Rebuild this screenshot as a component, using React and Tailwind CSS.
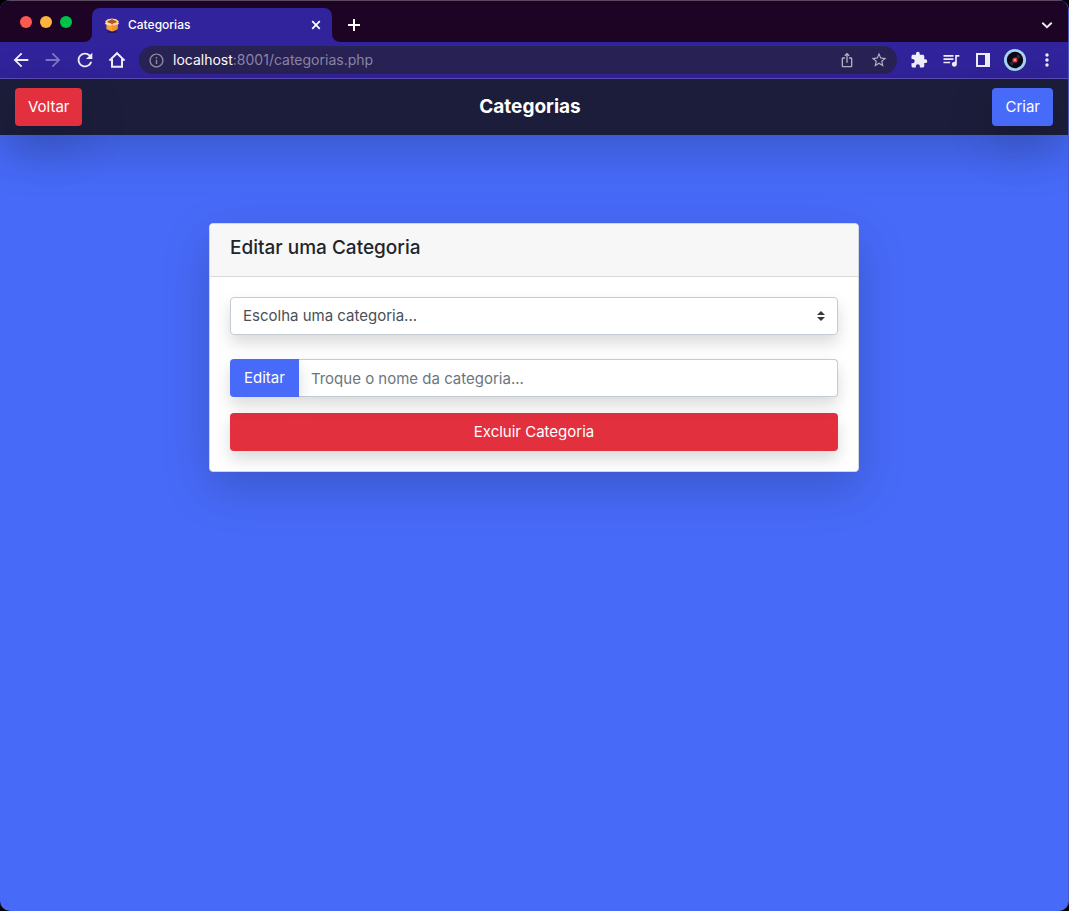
import React from "react";
import {
  MdArrowBack,
  MdArrowForward,
  MdRefresh,
  MdInfoOutline,
  MdIosShare,
  MdStarBorder,
  MdExtension,
  MdQueueMusic,
  MdMoreVert,
} from "react-icons/md";

const SHADOW_LG = "shadow-[0_16px_48px_rgba(0,0,0,0.175)]";
const SHADOW_MD = "shadow-[0_8px_16px_rgba(0,0,0,0.15)]";

function IconButton({ label, children }) {
  return (
    <button type="button" aria-label={label} className="flex h-7 w-8 shrink-0 items-center justify-center">
      {children}
    </button>
  );
}

function BoxIcon() {
  return (
    <svg viewBox="0 0 16 16" className="size-4 shrink-0" aria-hidden="true">
      <path d="M3.5 14.4h9v1h-9z" fill="#151040" />
      <path d="M2.4 6h11.2v6L9 14.2H7L2.4 12z" fill="#f9a33b" />
      <path d="M8 7.5L13.6 6v6L9 14.2H8z" fill="#f3912c" />
      <path d="M3.4 3.6L8 2.2l4.6 1.4 1.2 2L8 7.4 2.2 5.6z" fill="#b0551c" />
      <path d="M1 4.6L3.6 2.2l4.4-.8-.2 1L4 4 2.4 6z" fill="#ffcf8a" />
      <path d="M15 4.6l-2.6-2.4L8 1.4l.2 1L12 4l1.6 2z" fill="#ffcf8a" />
      <path d="M2.2 4.8L8 7 6.9 8.8.8 7z" fill="#ffe2b4" />
      <path d="M13.8 4.8L8 7l1.1 1.8L15.2 7z" fill="#ffd79c" />
    </svg>
  );
}

function TabStrip() {
  return (
    <div className="flex h-[42px] items-end border-t border-[#5b4a60] bg-[#1e0424] text-white">
      <div className="flex h-full w-[92px] shrink-0 items-center bg-[#31239b]">
        <div className="flex h-full w-full items-center gap-2 rounded-br-lg bg-[#1e0424] pl-5">
          <button type="button" aria-label="Fechar janela" className="size-3 rounded-full bg-[#ff5850]" />
          <button type="button" aria-label="Minimizar janela" className="size-3 rounded-full bg-[#ffb43e]" />
          <button type="button" aria-label="Maximizar janela" className="size-3 rounded-full bg-[#00c249]" />
        </div>
      </div>
      <div className="flex h-[34px] w-60 shrink-0 items-center rounded-t-lg bg-[#31239b] pr-2 pl-3">
        <BoxIcon />
        <span className="grow pl-2 text-xs font-medium">Categorias</span>
        <button type="button" aria-label="Fechar aba" className="flex size-4 items-center justify-center">
          <svg viewBox="0 0 10 10" className="size-[10px]" fill="none" stroke="currentColor" strokeWidth="1.7">
            <path d="M1.2 1.2l7.6 7.6M8.8 1.2L1.2 8.8" />
          </svg>
        </button>
      </div>
      <div className="h-full grow bg-[#31239b]">
        <div className="flex h-full items-center justify-between rounded-bl-lg bg-[#1e0424] pt-[6px] pr-[13px] pl-[14px]">
          <button type="button" aria-label="Nova aba" className="flex size-4 items-center justify-center">
            <svg viewBox="0 0 12 12" className="size-3" fill="none" stroke="currentColor" strokeWidth="2">
              <path d="M6 0v12M0 6h12" />
            </svg>
          </button>
          <button type="button" aria-label="Pesquisar abas" className="flex size-4 items-center justify-center">
            <svg viewBox="0 0 12 12" className="size-3" fill="none" stroke="#eee8f0" strokeWidth="1.9">
              <path d="M1.3 3.7L6 8.2l4.7-4.5" />
            </svg>
          </button>
        </div>
      </div>
    </div>
  );
}

function Toolbar() {
  return (
    <div className="flex h-[37px] items-center border-b border-[#5e4fb4] bg-[#31239b] px-[5px] text-[#f1effa]">
      <IconButton label="Voltar página">
        <MdArrowBack size={22} />
      </IconButton>
      <IconButton label="Avançar página">
        <MdArrowForward size={22} className="text-[#8177c3]" />
      </IconButton>
      <IconButton label="Recarregar">
        <MdRefresh size={22} />
      </IconButton>
      <IconButton label="Página inicial">
        <svg viewBox="0 0 18 18" className="size-[18px]" fill="none" stroke="currentColor" strokeWidth="2">
          <path d="M1.4 9.6L9 2.2l7.6 7.4M4 8v7.8h10V8" />
        </svg>
      </IconButton>
      <div className="ml-[6px] flex h-7 min-w-0 grow items-center rounded-full bg-[#292255] pr-[2px] pl-[9px] text-[#b5b1c4]">
        <MdInfoOutline size={17} className="shrink-0 text-[#8d8f9f]" />
        <div
          role="textbox"
          aria-label="Endereço"
          className="min-w-0 grow truncate pl-2 text-sm text-[#8b86a8]"
        >
          <span className="text-white">localhost</span>:8001/categorias.php
        </div>
        <IconButton label="Compartilhar">
          <MdIosShare size={16} />
        </IconButton>
        <IconButton label="Favoritar">
          <MdStarBorder size={18} />
        </IconButton>
      </div>
      <div className="flex shrink-0 pl-[6px]">
        <IconButton label="Extensões">
          <MdExtension size={18} />
        </IconButton>
        <IconButton label="Controle de mídia">
          <MdQueueMusic size={20} />
        </IconButton>
        <IconButton label="Painel lateral">
          <svg viewBox="0 0 14 14" className="size-[14px]" fill="currentColor">
            <path fillRule="evenodd" d="M0 0h14v14H0zM2 2v10h7V2z" />
          </svg>
        </IconButton>
        <IconButton label="Perfil">
          <svg viewBox="0 0 22 22" className="size-[22px]">
            <circle cx="11" cy="11" r="11" fill="#a9d7f5" />
            <circle cx="11" cy="11" r="8.2" fill="#0b0b18" />
            <path d="M13.5 5.2a6.4 6.4 0 0 1 3.2 3.2l-3.2 1.4-1.4-1.4zM8.5 16.8a6.4 6.4 0 0 1-3.2-3.2l3.2-1.4 1.4 1.4z" fill="#2a2c3c" />
            <circle cx="11" cy="11" r="2.6" fill="#e8364c" />
            <circle cx="11" cy="11" r="1" fill="#ffc48a" />
          </svg>
        </IconButton>
        <IconButton label="Menu">
          <MdMoreVert size={20} />
        </IconButton>
      </div>
    </div>
  );
}

function Navbar() {
  return (
    <header
      className={`relative grid h-14 grid-cols-[1fr_auto_1fr] items-center bg-[#1b1d3a] px-[15px] text-white ${SHADOW_LG}`}
    >
      <a
        href="#voltar"
        className={`flex h-[38px] items-center justify-self-start rounded bg-[#e3303f] px-[13px] text-[15px] ${SHADOW_LG}`}
      >
        Voltar
      </a>
      <h1 className="mr-2 text-[19px] font-bold">Categorias</h1>
      <a
        href="#criar"
        className={`flex h-[38px] items-center justify-self-end rounded bg-[#476af8] px-[13px] text-[15px] ${SHADOW_LG}`}
      >
        Criar
      </a>
    </header>
  );
}

function EditCard() {
  return (
    <section
      className={`w-full max-w-[650px] rounded border border-[#d3d6de] bg-white ${SHADOW_LG}`}
    >
      <div className="rounded-t border-b border-[#d9d9da] bg-[#f7f7f7] px-5 pt-3 pb-4">
        <h2 className="text-[19px] leading-6 font-medium text-[#212529]">Editar uma Categoria</h2>
      </div>
      <form className="p-5" onSubmit={(e) => e.preventDefault()}>
        <div className={`relative rounded ${SHADOW_MD}`}>
          <select
            aria-label="Categoria"
            className="block h-[38px] w-full appearance-none rounded border border-[#c5cbd3] bg-white pr-7 pl-3 text-[15px] text-[#495057]"
          >
            <option>Escolha uma categoria...</option>
          </select>
          <svg
            viewBox="0 0 4 5"
            className="pointer-events-none absolute top-[14px] right-[13px] h-[10px] w-2"
            fill="#343a40"
            aria-hidden="true"
          >
            <path d="M2 0L0 2h4zm0 5L0 3h4z" />
          </svg>
        </div>
        <div className="mt-6 flex">
          <button
            type="submit"
            className={`relative h-[38px] shrink-0 rounded-l bg-[#476af8] px-[14px] text-[15px] text-white ${SHADOW_MD}`}
          >
            Editar
          </button>
          <input
            type="text"
            aria-label="Novo nome da categoria"
            placeholder="Troque o nome da categoria..."
            className={`h-[38px] min-w-0 grow rounded-r border border-l-0 border-[#c5cbd3] bg-white px-3 text-[15px] text-[#495057] placeholder:text-[#6c757d] ${SHADOW_MD}`}
          />
        </div>
        <button
          type="button"
          className={`mt-4 block h-[38px] w-full rounded bg-[#e3303f] text-[15px] text-white ${SHADOW_MD}`}
        >
          Excluir Categoria
        </button>
      </form>
    </section>
  );
}

export default function App() {
  return (
    <div className="min-h-screen bg-black font-['Inter','Liberation_Sans',sans-serif]">
      <div className="flex min-h-screen flex-col overflow-hidden rounded-[10px] border-r border-[#4a5cc4] bg-[#476af8]">
        <TabStrip />
        <Toolbar />
        <Navbar />
        <main className="flex grow items-start justify-center px-4 pt-[88px] pb-16">
          <EditCard />
        </main>
      </div>
    </div>
  );
}
